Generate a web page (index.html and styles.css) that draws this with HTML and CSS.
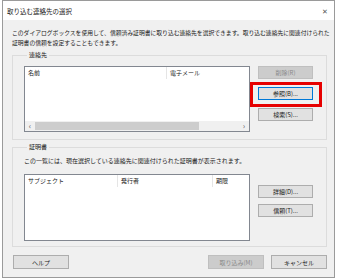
FILE: index.html
```html
<!DOCTYPE html>
<html lang="ja">
<head>
    <title>取り込む連絡先の選択</title>
    <link rel="stylesheet" href="styles.css">
</head>
<body>
<div class="dialog">
    <div class="titlebar">
        <span class="title">取り込む連絡先の選択</span>
        <span class="close">&#x2715;</span>
    </div>
    <div class="content">
        <p class="intro">
            このダイアログボックスを使用して、信頼済み証明書に取り込む連絡先を選択できます。取り込む連絡先に関連付けられた<br/>
            証明書の信頼を設定することもできます。
        </p>

        <fieldset class="group first">
            <legend>連絡先</legend>
            <div class="row">
                <div class="list contacts">
                    <div class="head">
                        <span class="col name">名前</span>
                        <span class="col mail">電子メール</span>
                    </div>
                    <div class="rows"></div>
                    <div class="hscroll">
                        <span class="arrow">&lsaquo;</span>
                        <span class="thumb"></span>
                        <span class="track"></span>
                        <span class="arrow">&rsaquo;</span>
                    </div>
                </div>
                <div class="buttons">
                    <button class="disabled">削除(R)</button>
                    <button class="focused">参照(B)...</button>
                    <button>検索(S)...</button>
                </div>
            </div>
        </fieldset>

        <fieldset class="group second">
            <legend>証明書</legend>
            <p class="note">この一覧には、現在選択している連絡先に関連付けられた証明書が表示されます。</p>
            <div class="row">
                <div class="list certs">
                    <div class="head">
                        <span class="col subject">サブジェクト</span>
                        <span class="col issuer">発行者</span>
                        <span class="col expire">期限</span>
                    </div>
                </div>
                <div class="buttons later">
                    <button>詳細(D)...</button>
                    <button>信頼(T)...</button>
                </div>
            </div>
        </fieldset>

        <div class="footer">
            <button class="wide">ヘルプ</button>
            <span class="spacer"></span>
            <button class="wide disabled">取り込み(M)</button>
            <button class="wide">キャンセル</button>
        </div>
    </div>
</div>
<div class="highlight"></div>
</body>
</html>
```

FILE: styles.css
```css
* {
    box-sizing: border-box;
}
body {
    margin: 0;
    background: #ffffff;
    font-family: "Noto Sans CJK JP", "Noto Sans", sans-serif;
    font-size: 6px;
    color: #1a1a1a;
}
.dialog {
    margin-left: 2px;
    width: 333px;
    height: 278px;
    border: 1px solid #9a9a9a;
    background: #f0f0f0;
}
.titlebar {
    height: 19px;
    background: #ffffff;
    display: flex;
    align-items: center;
    justify-content: space-between;
    padding: 0 6px 0 4px;
}
.title {
    font-size: 6.5px;
    color: #222;
}
.close {
    font-size: 7px;
    color: #555;
}
.content {
    padding: 8px 7px 0 9px;
}
.intro {
    margin: 0;
    font-size: 5.8px;
    line-height: 9.5px;
    white-space: nowrap;
}
.group {
    margin: 4px 0 0 0;
    padding: 0 10px 0 11px;
    border: 1px solid #dcdcdc;
}
.group legend {
    margin-left: 3px;
    padding: 0 2px;
    line-height: 8px;
}
.group.first {
    padding-bottom: 7px;
}
.group.second {
    margin-top: 3px;
    padding-bottom: 5px;
}
.row {
    display: flex;
    gap: 8px;
}
.first .row {
    margin-top: 7px;
}
.note {
    margin: 5px 0 9px 0;
    line-height: 9px;
    white-space: nowrap;
}
.list {
    width: 226px;
    background: #ffffff;
    border: 1px solid #828790;
    display: flex;
    flex-direction: column;
}
.contacts {
    height: 66px;
}
.certs {
    height: 67px;
}
.head {
    display: flex;
    height: 12px;
    align-items: center;
}
.col {
    padding-left: 3px;
    line-height: 12px;
    border-right: 1px solid #e5e5e5;
}
.name { width: 142px; }
.mail { flex: 1; border-right: none; }
.subject { width: 93px; }
.issuer { width: 95px; }
.expire { flex: 1; border-right: none; }
.rows {
    flex: 1;
}
.hscroll {
    height: 10px;
    display: flex;
    align-items: center;
    background: #f0f0f0;
}
.arrow {
    width: 10px;
    text-align: center;
    font-size: 8px;
    line-height: 10px;
    color: #606060;
}
.thumb {
    width: 164px;
    height: 8px;
    background: #cdcdcd;
}
.track {
    flex: 1;
}
.buttons {
    display: flex;
    flex-direction: column;
    gap: 8px;
}
.buttons.later {
    margin-top: 11px;
    gap: 6px;
}
button {
    width: 55px;
    height: 13px;
    padding: 0;
    border: 1px solid #adadad;
    background: #e1e1e1;
    font-family: inherit;
    font-size: 6px;
    color: #1a1a1a;
    line-height: 11px;
}
button.focused {
    border-color: #0078d7;
}
button.disabled {
    background: #cccccc;
    border-color: #bfbfbf;
    color: #8a8a8a;
}
.footer {
    display: flex;
    gap: 7px;
    margin-top: 8px;
    padding-left: 1px;
}
.footer .wide {
    width: 56px;
    height: 14px;
}
.spacer {
    flex: 1;
}
.highlight {
    position: absolute;
    left: 250px;
    top: 82px;
    width: 72px;
    height: 25px;
    border: 3px solid #e60000;
}
```
